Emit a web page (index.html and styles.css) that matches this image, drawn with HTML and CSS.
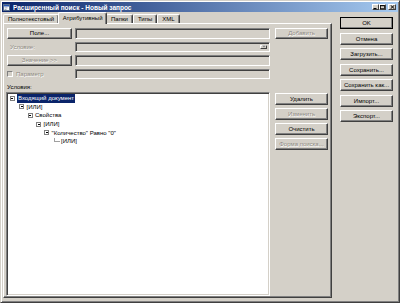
FILE: index.html
```html
<!DOCTYPE html>
<html lang="ru">
<head>
    <meta charset="UTF-8">
    <meta name="viewport" content="width=device-width, initial-scale=1.0">
    <title>Расширенный поиск - Новый запрос</title>
    <link rel="stylesheet" href="styles.css">
</head>
<body>
    <div class="window">
        <!-- заголовок окна -->
        <div class="titlebar">
            <svg class="app-icon" width="7" height="7" viewBox="0 0 7 7">
                <rect x="0.5" y="0.5" width="6" height="6" fill="#fff" stroke="#5a6f8c"/>
                <rect x="1" y="1" width="5" height="1.5" fill="#2a56b0"/>
                <rect x="1.5" y="3.5" width="3" height="0.8" fill="#8a96aa"/>
                <rect x="1.5" y="5" width="2" height="0.8" fill="#8a96aa"/>
            </svg>
            <span class="title">Расширенный поиск - Новый запрос</span>
            <div class="caption-btns">
                <span class="cap-btn">
                    <svg width="5" height="4" viewBox="0 0 5 4"><rect x="0.5" y="3" width="3" height="1" fill="#000"/></svg>
                </span>
                <span class="cap-btn">
                    <svg width="5" height="4" viewBox="0 0 5 4"><rect x="0.5" y="0.5" width="4" height="3.2" fill="none" stroke="#000" stroke-width="0.8"/><rect x="0.5" y="0.3" width="4" height="0.9" fill="#000"/></svg>
                </span>
                <span class="cap-btn close">
                    <svg width="5" height="4" viewBox="0 0 5 4"><path d="M0.6 0.2 L4.4 3.8 M4.4 0.2 L0.6 3.8" stroke="#000" stroke-width="1"/></svg>
                </span>
            </div>
        </div>

        <div class="main">
            <div class="tabs">
                <div class="tab-strip">
                    <div class="tab">Полнотекстовый</div>
                    <div class="tab active">Атрибутивный</div>
                    <div class="tab">Папки</div>
                    <div class="tab">Типы</div>
                    <div class="tab">XML</div>
                </div>

                <div class="panel">
                    <div class="form">
                        <div class="btn">Поле...</div>
                        <div class="field"></div>
                        <div class="btn disabled add">Добавить</div>

                        <div class="lbl disabled">Условие:</div>
                        <div class="field select">
                            <span class="drop">
                                <svg width="4" height="3" viewBox="0 0 4 3"><path d="M0 0.5 H4 L2 2.5 Z" fill="#808080"/></svg>
                            </span>
                        </div>
                        <div></div>

                        <div class="btn disabled">Значение &gt;&gt;</div>
                        <div class="field"></div>
                        <div></div>

                        <div class="check disabled"><span class="box"></span>Параметр</div>
                        <div class="field"></div>
                    </div>

                    <div class="lbl cond">Условия:</div>

                    <div class="lower">
                        <div class="tree">
                            <div class="row l0"><span class="exp"></span><span class="sel">Входящий документ</span></div>
                            <div class="row l1"><span class="exp"></span><span>[ИЛИ]</span></div>
                            <div class="row l2"><span class="exp"></span><span>Свойства</span></div>
                            <div class="row l3"><span class="exp"></span><span>[ИЛИ]</span></div>
                            <div class="row l4"><span class="exp"></span><span>"Количество" Равно "0"</span></div>
                            <div class="row l5"><span class="leaf"></span><span>[ИЛИ]</span></div>
                        </div>
                        <div class="tree-btns">
                            <div class="btn">Удалить</div>
                            <div class="btn disabled">Изменить</div>
                            <div class="btn">Очистить</div>
                            <div class="btn disabled">Форма поиска...</div>
                        </div>
                    </div>
                </div>
            </div>

            <div class="side">
                <div class="btn default">OK</div>
                <div class="btn">Отмена</div>
                <div class="btn">Загрузить...</div>
                <div class="btn">Сохранить...</div>
                <div class="btn">Сохранить как...</div>
                <div class="btn">Импорт...</div>
                <div class="btn">Экспорт...</div>
            </div>
        </div>
    </div>
</body>
</html>
```

FILE: styles.css
```css
*{
    margin: 0;
    padding: 0;
    box-sizing: border-box;
}
body{
    background: #d4d0c8;
    font-family: "Liberation Sans", Arial, sans-serif;
    font-size: 6px;
    color: #000;
}
.window{
    width: 400px;
    height: 303px;
    border: 1px solid;
    border-color: #d4d0c8 #404040 #404040 #d4d0c8;
    box-shadow: inset 1px 1px #fff, inset -1px -1px #808080;
    padding: 1px;
    display: flex;
    flex-direction: column;
}

/* заголовок */
.titlebar{
    height: 10px;
    flex: none;
    background: linear-gradient(to right, #0a246a, #a6caf0);
    display: flex;
    align-items: center;
    padding: 0 2px 0 1px;
    color: #fff;
    font-weight: bold;
    font-size: 6.5px;
}
.app-icon{
    margin-right: 3px;
}
.title{
    flex: 1;
    white-space: nowrap;
}
.caption-btns{
    display: flex;
}
.cap-btn{
    width: 7px;
    height: 6px;
    background: #d4d0c8;
    border: 1px solid;
    border-color: #fff #404040 #404040 #fff;
    display: flex;
    align-items: center;
    justify-content: center;
}
.cap-btn.close{
    margin-left: 2px;
    width: 8px;
}

.main{
    flex: 1;
    display: flex;
}

/* вкладки */
.tabs{
    width: 329px;
    margin-left: 1px;
    margin-bottom: 3px;
    display: flex;
    flex-direction: column;
}
.tab-strip{
    height: 11px;
    display: flex;
    align-items: flex-end;
}
.tab{
    height: 9px;
    line-height: 8px;
    padding: 0 4px;
    border: 1px solid;
    border-bottom: none;
    border-color: #fff #404040 #404040 #fff;
    box-shadow: inset -1px 0 #808080;
    border-radius: 2px 2px 0 0;
    white-space: nowrap;
}
.tab.active{
    height: 12px;
    line-height: 10px;
    margin: 0 -1px -1px;
    padding: 0 3.5px;
    position: relative;
    z-index: 1;
    background: #d4d0c8;
}
.panel{
    flex: 1;
    border: 1px solid;
    border-color: #fff #404040 #404040 #fff;
    box-shadow: inset -1px -1px #808080;
    padding: 4px 2px 1px 3px;
    display: flex;
    flex-direction: column;
}

/* поля */
.form{
    display: grid;
    grid-template-columns: 65px 195px 55px;
    grid-auto-rows: 10.5px;
    column-gap: 3px;
    row-gap: 3px;
}
.btn{
    height: 100%;
    background: #d4d0c8;
    border: 1px solid;
    border-color: #fff #404040 #404040 #fff;
    box-shadow: inset -1px -1px #808080;
    display: flex;
    align-items: center;
    justify-content: center;
    white-space: nowrap;
}
.disabled{
    color: #8e8a83;
    text-shadow: 0.5px 0.5px #fff;
}
.add{
    width: 53px;
    justify-self: end;
}
.field{
    border: 1px solid;
    border-color: #808080 #fff #fff #808080;
    box-shadow: inset 1px 1px #404040, inset -1px -1px #d4d0c8;
    background: #d4d0c8;
}
.select{
    display: flex;
    justify-content: flex-end;
    padding: 2px;
}
.drop{
    width: 7px;
    background: #d4d0c8;
    border: 1px solid;
    border-color: #fff #404040 #404040 #fff;
    display: flex;
    align-items: center;
    justify-content: center;
}
.lbl{
    display: flex;
    align-items: center;
    padding-left: 3px;
}
.check{
    display: flex;
    align-items: center;
    gap: 3px;
}
.check .box{
    width: 6px;
    height: 6px;
    border: 1px solid;
    border-color: #808080 #fff #fff #808080;
    background: #d4d0c8;
}
.lbl.cond{
    height: 8px;
    margin-top: 3.5px;
    padding-left: 0;
}

/* дерево условий */
.lower{
    flex: 1;
    display: flex;
    gap: 5px;
    margin-top: 1.5px;
    margin-left: -1px;
}
.tree{
    width: 264px;
    background: #fff;
    border: 1px solid;
    border-color: #808080 #fff #fff #808080;
    box-shadow: inset 1px 1px #404040, inset -1px -1px #d4d0c8;
    padding-top: 1px;
}
.row{
    height: 8.6px;
    display: flex;
    align-items: center;
    white-space: nowrap;
}
.l0{ padding-left: 2.5px; }
.l1{ padding-left: 12px; }
.l2{ padding-left: 20.5px; }
.l3{ padding-left: 29px; }
.l4{ padding-left: 37px; }
.l5{ padding-left: 47px; }
.exp{
    width: 5px;
    height: 5px;
    border: 1px solid #808080;
    background: #fff;
    margin-right: 2.5px;
    position: relative;
}
.exp::before{
    content: "";
    position: absolute;
    left: 0.5px;
    top: 1px;
    width: 2px;
    height: 1px;
    background: #000;
}
.leaf{
    width: 5px;
    height: 8.6px;
    margin-right: 2px;
    position: relative;
}
.leaf::before{
    content: "";
    position: absolute;
    left: 0;
    top: 1px;
    width: 5px;
    height: 3.5px;
    border-left: 1px solid #a0a0a0;
    border-bottom: 1px solid #a0a0a0;
}
.sel{
    background: #0a246a;
    color: #fff;
    padding: 0 1px;
    height: 8.5px;
    line-height: 8.5px;
}
.tree-btns{
    width: 53px;
    display: flex;
    flex-direction: column;
    gap: 3.5px;
    margin-top: 1px;
}
.tree-btns .btn{
    height: 11.5px;
    flex: none;
}

/* кнопки справа */
.side{
    width: 53px;
    margin-left: 8px;
    margin-top: 5px;
    display: flex;
    flex-direction: column;
    gap: 3.5px;
}
.side .btn{
    height: 12px;
    flex: none;
}
.btn.default{
    outline: 1px solid #000;
    outline-offset: -1px;
}
```
